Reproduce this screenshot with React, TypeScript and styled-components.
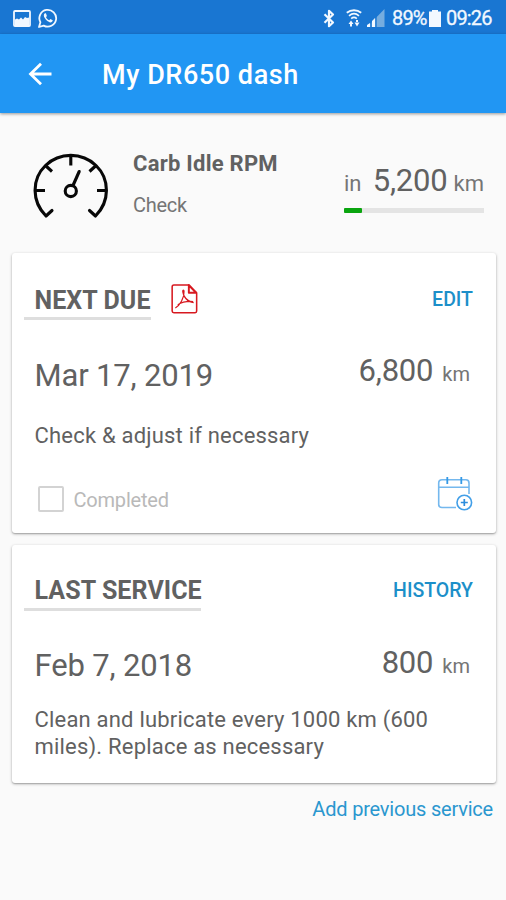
import React from "react";
import styled, { createGlobalStyle } from "styled-components";

const GlobalStyle = createGlobalStyle`
  *, *::before, *::after { box-sizing: border-box; }
  body { margin: 0; background: #fafafa; }
  svg { display: block; flex: none; }
`;

const Screen = styled.main`
  display: flex;
  flex-direction: column;
  width: 506px;
  height: 900px;
  overflow: hidden;
  background: #fafafa;
  color: #616161;
  font-family: Roboto, "Liberation Sans", sans-serif;
`;

const StatusBar = styled.div`
  display: flex;
  align-items: center;
  justify-content: space-between;
  height: 34px;
  flex: none;
  padding: 2px 13px 0 13px;
  background: #1976d2;
  color: #f2f8ff;
`;

const StatusGroup = styled.div<{ $gap: number }>`
  display: flex;
  align-items: center;
  gap: ${(p) => p.$gap}px;
`;

const StatusText = styled.span<{ $width: number }>`
  width: ${(p) => p.$width}px;
  font-size: 20px;
  line-height: 24px;
  letter-spacing: -0.85px;
  white-space: nowrap;
  -webkit-text-stroke: 0.3px currentColor;
`;

const AppBar = styled.header`
  display: flex;
  align-items: center;
  gap: 50px;
  height: 79px;
  flex: none;
  padding: 0 28px;
  background: #2196f3;
  color: #fff;
  box-shadow: 0 1px 3px rgba(0, 0, 0, 0.4);
`;

const Title = styled.h1`
  margin: 3px 0 0;
  font-size: 27px;
  font-weight: 500;
  line-height: 32px;
  letter-spacing: 0.55px;
  white-space: nowrap;
`;

const Summary = styled.section`
  display: flex;
  height: 140px;
  flex: none;
  padding: 38px 22px 0 33px;
`;

const SummaryText = styled.div`
  flex: 1;
  padding-left: 24px;
`;

const TaskName = styled.h2`
  margin: 0;
  font-size: 22px;
  font-weight: 700;
  line-height: 26px;
  letter-spacing: 0.25px;
  white-space: nowrap;
`;

const TaskKind = styled.div`
  margin-top: 16px;
  font-size: 20px;
  line-height: 24px;
  letter-spacing: -0.3px;
  color: #757575;
`;

const Remaining = styled.div`
  width: 140px;
  padding-top: 12px;
`;

const RemainingLine = styled.div`
  display: flex;
  align-items: baseline;
  line-height: 36px;
  white-space: nowrap;
`;

const Figure = styled.span`
  font-size: 31px;
  letter-spacing: -0.2px;
`;

const RemainingFigure = styled(Figure)`
  margin: 0 6px 0 auto;
`;

const Unit = styled.span<{ $size: number }>`
  font-size: ${(p) => p.$size}px;
  color: #757575;
`;

const Track = styled.div`
  height: 5px;
  margin-top: 6px;
  background: #e4e4e4;
`;

const Progress = styled.div`
  width: 18px;
  height: 5px;
  border-radius: 1px;
  background: #0aa50f;
`;

const Card = styled.section<{ $height: number; $top: number }>`
  display: flex;
  flex-direction: column;
  height: ${(p) => p.$height}px;
  flex: none;
  margin: 0 10px 12px 12px;
  padding: ${(p) => p.$top}px 23px 0 11.5px;
  border-radius: 3px;
  background: #fff;
  box-shadow: 0 1px 3px rgba(0, 0, 0, 0.32), 0 1px 1px rgba(0, 0, 0, 0.12);
`;

const CardHead = styled.div`
  display: flex;
  align-items: flex-start;
  height: 37px;
`;

const Heading = styled.h2<{ $width: number; $drop: number }>`
  width: ${(p) => p.$width}px;
  height: ${(p) => 36 - p.$drop}px;
  margin: ${(p) => p.$drop}px 20px 0 0;
  padding: 0 0 0 11px;
  border-bottom: 3px solid #dedede;
  font-size: 25px;
  font-weight: 700;
  line-height: 30px;
  letter-spacing: 0.08px;
  white-space: nowrap;
`;

const CardAction = styled.button`
  margin: 1px 0 0 auto;
  padding: 0;
  border: 0;
  background: none;
  color: #1c8fc9;
  font: 500 19.5px/30px Roboto, "Liberation Sans", sans-serif;
`;

const Schedule = styled.div`
  display: flex;
  justify-content: space-between;
  height: 40px;
  margin-top: 32px;
  padding: 0 3px 0 11px;
  line-height: 36px;
  white-space: nowrap;
`;

const DateText = styled.span<{ $drop: number }>`
  padding-top: ${(p) => p.$drop}px;
  font-size: 31px;
  letter-spacing: -0.15px;
`;

const Amount = styled.span<{ $drop: number }>`
  display: flex;
  align-items: baseline;
  gap: 9px;
  padding-top: ${(p) => p.$drop}px;
`;

const Note = styled.p<{ $top: number }>`
  margin: ${(p) => p.$top}px 0 0 11px;
  font-size: 22px;
  line-height: 27px;
  letter-spacing: 0.2px;
`;

const CardFoot = styled.div`
  display: flex;
  align-items: flex-start;
  justify-content: space-between;
  margin-top: 27px;
  padding-left: 14px;
`;

const Check = styled.label`
  display: flex;
  gap: 10px;
  padding-top: 10px;
  color: #b9b9b9;
  font-size: 20px;
  line-height: 28px;
  letter-spacing: -0.2px;
`;

const Box = styled.span`
  width: 26px;
  height: 26px;
  border: 2px solid #d3d3d3;
  border-radius: 2px;
`;

const AddLink = styled.a`
  align-self: flex-end;
  margin-right: 13px;
  color: #2a97cf;
  font-size: 20px;
  line-height: 28px;
  letter-spacing: -0.2px;
  white-space: nowrap;
`;

const PictureIcon = () => (
  <svg width="18" height="17" viewBox="0 0 18 17">
    <rect x="1" y="1" width="16" height="15" rx="1" fill="none" stroke="currentColor" strokeWidth="1.800" />
    <path d="M2 9.500 4 8.500l2 1L8 7.500l2 2 2-2.500L14 8l2-.5V16H2z" fill="currentColor" />
  </svg>
);

const WhatsAppIcon = () => (
  <svg width="20" height="20" viewBox="0 0 20 20" fill="none" stroke="currentColor">
    <path d="M1 19l1.400-4.700A8.400 8.400 0 1 1 5.700 17.600z" strokeWidth="1.800" strokeLinejoin="round" />
    <path
      d="M7 5.200c-1.600.8-1.500 2.900-.2 4.900 1.500 2.400 3.500 4 5.300 4.300 1.500.1 2.600-.9 2.700-2.200l-2.400-1.200-1.200 1.300c-1.500-.6-2.500-1.700-3.200-3l.9-1.200L7.900 5.200z"
      fill="currentColor"
      stroke="none"
    />
  </svg>
);

const BluetoothIcon = () => (
  <svg width="12" height="19" viewBox="0 0 12 19" fill="none" stroke="currentColor" strokeWidth="2.200">
    <path d="M1.500 5.300 10 13.500l-4 3.700V1.800l4 3.700-8.500 8.200" strokeLinejoin="round" />
  </svg>
);

const WifiIcon = () => (
  <svg width="16" height="18" viewBox="0 0 16 18" fill="none" stroke="currentColor">
    <path d="M.8 3.800C5 .3 11 .3 15.200 3.800" strokeWidth="1.900" />
    <path d="M3 6.800c3-2.500 7-2.500 10 0M5.200 9.600c1.800-1.500 3.800-1.500 5.600 0" strokeWidth="1.700" />
    <path d="M2.500 15 5 11.500 7.500 15zM8.500 13.500l2.500 4 2.500-4zM4 14.500h2v3H4zM10 11h2v3h-2z" fill="currentColor" stroke="none" />
  </svg>
);

const SignalIcon = () => (
  <svg width="18" height="18" viewBox="0 0 18 18">
    <path d="M0 18 17.500 0v18z" fill="#76addf" />
    <path d="M0 18v-2l3-2v4zM5 18v-6l3-3v9z" fill="currentColor" />
    <path d="M4 9v9M9 5v13" stroke="#1976d2" strokeWidth="1.300" />
  </svg>
);

const BatteryIcon = () => (
  <svg width="12" height="17" viewBox="0 0 12 17">
    <path d="M3 0h6v1.500h3V17H0V1.500h3z" fill="currentColor" />
  </svg>
);

const BackIcon = () => (
  <svg width="24" height="24" viewBox="0 0 24 24" fill="none" stroke="currentColor" strokeWidth="2.800">
    <path d="M23.500 12H3M13 1.700 2.500 12 13 22.300" />
  </svg>
);

const GaugeIcon = () => (
  <svg width="76" height="70" viewBox="0 -1.500 76 70" fill="none" stroke="#080808" strokeWidth="3.100" strokeLinecap="round">
    <path
      d="M19 58 13 63.500C-1.500 49-1.500 26.500 12.500 13c14-13.500 36.500-13.500 50.500 0 14 13.500 14 36-.5 50.500l-6-5.500"
      strokeLinejoin="round"
    />
    <path d="M37.800 3v10M13 13.500l6 5.500M62.500 13.500l-6 5.500M3 38h9M73 38h-9" strokeLinecap="butt" />
    <circle cx="37.800" cy="38.500" r="5.600" />
    <path d="M40 33 46.200 19" />
  </svg>
);

const PdfIcon = () => (
  <svg width="27" height="30" viewBox="0 0 28 31" fill="none" stroke="#d71920" strokeWidth="1.600">
    <path d="M18 1H3Q1.200 1 1.200 3v25q0 1.700 1.800 1.700h22q1.600 0 1.600-1.700V9z" strokeLinejoin="round" />
    <path d="M18.500 1v8H26z" strokeWidth="2" strokeLinejoin="round" />
    <path
      d="M4.500 24.800c4.500-2.500 9.500-10.300 9-17.300-.2-1.700-1.500-1.500-1.300.3C12.700 12.500 16.500 18.500 23.500 19.200M7 21.500c4-2.500 10-3.800 16-3.300"
      strokeWidth="1.300"
    />
  </svg>
);

const CalendarIcon = () => (
  <svg width="36" height="36" viewBox="0 0 36 36" fill="none" stroke="#74b8ee" strokeWidth="1.600">
    <path d="M19 31.500H5Q1.700 31.500 1.700 28.500V7Q1.700 3.700 5 3.700h24q3 0 3 3.300v11M2 11.200h30" />
    <path d="M10.300 1v7M24.300 1v7" stroke="#3499e6" strokeWidth="1.800" />
    <circle cx="27.300" cy="26.500" r="7.300" fill="#fff" stroke="#429fe8" />
    <path d="M27.300 23v7M23.800 26.500h7" stroke="#2c8ddd" strokeWidth="1.700" />
  </svg>
);

export default function App() {
  return (
    <>
      <GlobalStyle />
      <Screen>
        <StatusBar>
          <StatusGroup $gap={7}>
            <PictureIcon />
            <WhatsAppIcon />
          </StatusGroup>
          <StatusGroup $gap={5}>
            <StatusGroup $gap={7}>
              <StatusGroup $gap={5}>
                <StatusGroup $gap={11}>
                  <BluetoothIcon />
                  <WifiIcon />
                </StatusGroup>
                <SignalIcon />
              </StatusGroup>
              <StatusText $width={32}>89%</StatusText>
            </StatusGroup>
            <BatteryIcon />
            <StatusText $width={47}>09:26</StatusText>
          </StatusGroup>
        </StatusBar>
        <AppBar>
          <BackIcon />
          <Title>My DR650 dash</Title>
        </AppBar>
        <Summary>
          <GaugeIcon />
          <SummaryText>
            <TaskName>Carb Idle RPM</TaskName>
            <TaskKind>Check</TaskKind>
          </SummaryText>
          <Remaining>
            <RemainingLine>
              <Unit $size={22}>in</Unit>
              <RemainingFigure>5,200</RemainingFigure>
              <Unit $size={22}>km</Unit>
            </RemainingLine>
            <Track>
              <Progress />
            </Track>
          </Remaining>
        </Summary>
        <Card $height={280} $top={31}>
          <CardHead>
            <Heading $width={127.5} $drop={2}>NEXT DUE</Heading>
            <PdfIcon />
            <CardAction>EDIT</CardAction>
          </CardHead>
          <Schedule>
            <DateText $drop={5}>Mar 17, 2019</DateText>
            <Amount $drop={0}>
              <Figure>6,800</Figure>
              <Unit $size={20}>km</Unit>
            </Amount>
          </Schedule>
          <Note $top={29}>Check &amp; adjust if necessary</Note>
          <CardFoot>
            <Check>
              <Box />
              Completed
            </Check>
            <CalendarIcon />
          </CardFoot>
        </Card>
        <Card $height={238} $top={30}>
          <CardHead>
            <Heading $width={177.5} $drop={1}>LAST SERVICE</Heading>
            <CardAction>HISTORY</CardAction>
          </CardHead>
          <Schedule>
            <DateText $drop={4}>Feb 7, 2018</DateText>
            <Amount $drop={1}>
              <Figure>800</Figure>
              <Unit $size={20}>km</Unit>
            </Amount>
          </Schedule>
          <Note $top={22}>
            Clean and lubricate every 1000 km (600
            <br />
            miles). Replace as necessary
          </Note>
        </Card>
        <AddLink>Add previous service</AddLink>
      </Screen>
    </>
  );
}
